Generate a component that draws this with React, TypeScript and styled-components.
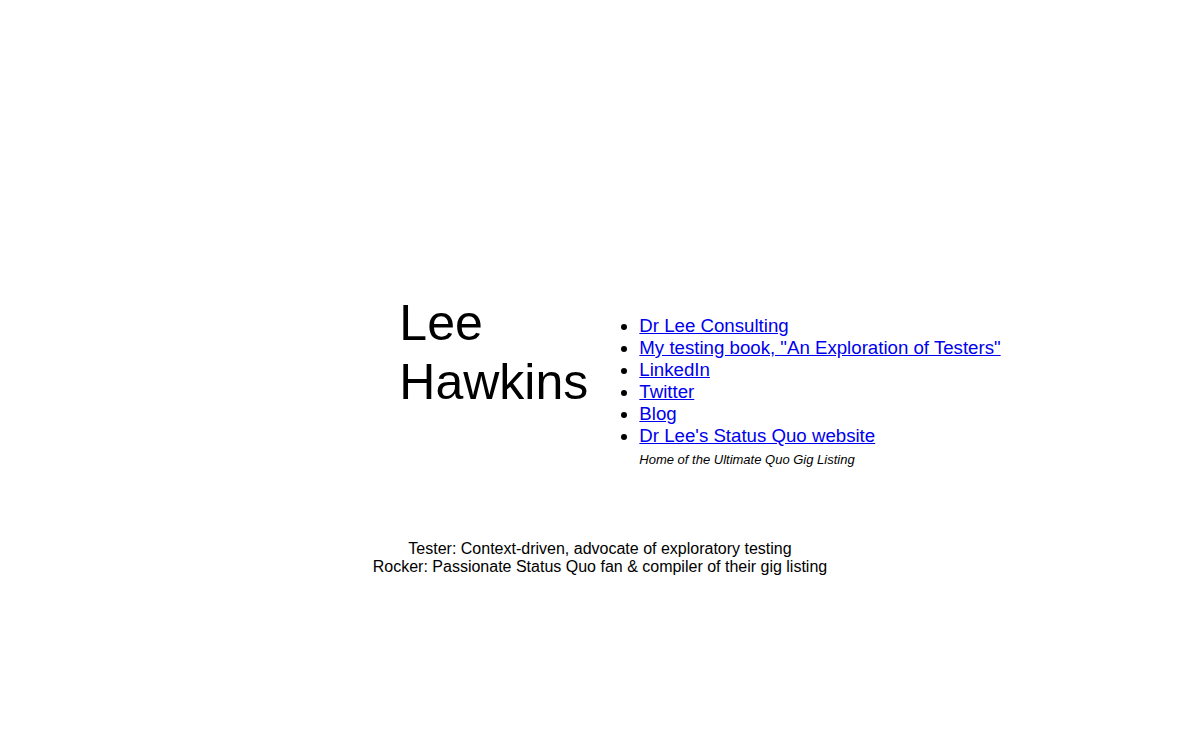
import React from "react";
import styled, { createGlobalStyle } from "styled-components";

const GlobalStyle = createGlobalStyle`
  html, body {
    margin: 0;
    padding: 0;
    background: #ffffff;
  }
  body {
    font-family: "Liberation Sans", Arial, sans-serif;
    color: #000000;
  }
`;

const Page = styled.main`
  padding-top: 294px;
  width: 1200px;
`;

const Row = styled.section`
  display: flex;
  justify-content: center;
  align-items: flex-start;
  padding-left: 200px;
`;

const Name = styled.h1`
  margin: 0;
  width: 200px;
  font-size: 50px;
  line-height: 59px;
  font-weight: normal;
`;

const LinkList = styled.ul`
  margin: 21px 0 0 0;
  padding-left: 40px;
  list-style: disc;
  font-size: 18.66px;
  line-height: 22px;
`;

const Item = styled.li``;

const Link = styled.a`
  color: #0000ee;
  text-decoration: underline;
`;

const Note = styled.div`
  padding-top: 5px;
  font-size: 13px;
  line-height: 15px;
  font-style: italic;
`;

const Tagline = styled.p`
  margin: 73px 0 0 0;
  text-align: center;
  font-size: 16px;
  line-height: 18px;
`;

const links = [
  "Dr Lee Consulting",
  'My testing book, "An Exploration of Testers"',
  "LinkedIn",
  "Twitter",
  "Blog",
];

export default function App() {
  return (
    <>
      <GlobalStyle />
      <Page>
        <Row>
          <Name>
            Lee
            <br />
            Hawkins
          </Name>
          <LinkList>
            {links.map((l) => (
              <Item key={l}>
                <Link href="#">{l}</Link>
              </Item>
            ))}
            <Item>
              <Link href="#">Dr Lee's Status Quo website</Link>
              <Note>Home of the Ultimate Quo Gig Listing</Note>
            </Item>
          </LinkList>
        </Row>
        <Tagline>
          Tester: Context-driven, advocate of exploratory testing
          <br />
          Rocker: Passionate Status Quo fan &amp; compiler of their gig listing
        </Tagline>
      </Page>
    </>
  );
}
